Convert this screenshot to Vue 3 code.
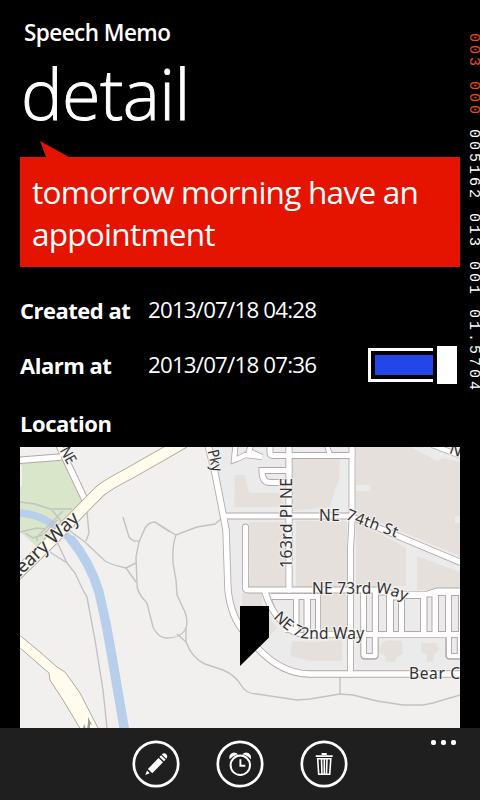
<script setup>
import { ref } from 'vue'

const memo = ref('tomorrow morning have an appointment')
const created = '2013/07/18 04:28'
const alarm = '2013/07/18 07:36'
const alarmOn = ref(true)

const trails = [
  'M20,502L35,504L50,509H72', 'M37,541V537L63,511', 'M52,510L60,520L70,531L85,542L105,561Q112,565 126,568L136,563',
  'M20,532L37,528L45,529', 'M25,533L33,538L43,535L57,520', 'M87,512L88,523L89,533L86,541',
  'M57,542L67,563L75,573L83,590L87,597L95,640L103,690L107,728', 'M50,552L67,563',
  'M123,517L129,537Q133,542 139,541', 'M170,532Q159,525 155,522Q149,522 145,528L139,542L136,557L137,583Q136,592 147,603L153,627Q158,638 167,638Q180,638 185,630',
  'M126,568L136,582', 'M155,522L176,535L197,527L215,524L221,519', 'M176,535Q172,545 173,563L176,580L177,595L185,612Q189,623 185,630',
  'M186,627V642', 'M177,634L186,642Q192,658 205,664L223,670Q235,675 241,685Q246,694 257,694L297,700L310,699L340,694L353,695L377,701L403,705H423L433,703L460,695', 'M340,676V694'
]
const roads = [
  ['M207,440L209,449L215,473L223,514L226,530L228,590Q231,618 246,634Q275,674 310,674H465', 5.6],
  ['M227,516H350L393,534L462,563', 5.2],
  ['M289,440V590', 5.4],
  ['M352,440V520L350.5,550V674', 5.2],
  ['M245.500,527V587Q245,590 248,590H383Q390,594 400,595H425L437,591H465', 5.2],
  ['M270,440V452Q270,455.500 273,455.500H352', 5.2],
  ['M289,470.500H262Q262,482.500 270,482.500H289', 5.2],
  ['M236,440L234,460Q240,458 245,455L262,457L249,451L253,440', 4.4],
  ['M265,592Q270,610 284,624Q292,634 307,634.500H465', 5.4],
  ['M325,440L330,455', 4]
]
const lotBoxes = [
  [366.5, 593, 5.8, 38.5], [378.5, 595, 8, 36.500], [393.5, 600, 5, 31.500], [404.5, 598.5, 16, 33],
  [427, 597, 5, 34.500], [438.5, 595.5, 7, 36], [451.5, 595.5, 7, 36],
  [299, 599.5, 5, 33], [310.5, 599.5, 5, 32]
]
</script>

<template>
  <main class="phone">
    <header class="head">
      <p class="app-name">Speech Memo</p>
      <h1 class="title">detail</h1>
    </header>

    <section class="content">
      <svg class="tail" viewBox="0 0 29 16"><path d="M0,0L29,16H6Z" /></svg>
      <div class="bubble">{{ memo }}</div>
      <div class="row created">
        <b>Created at</b><span>{{ created }}</span>
      </div>
      <div class="row alarm">
        <b>Alarm at</b><span>{{ alarm }}</span>
        <button class="toggle" :aria-pressed="alarmOn" @click="alarmOn = !alarmOn">
          <span class="track"><span class="fill"></span></span><span class="thumb"></span>
        </button>
      </div>
      <h2 class="loc">Location</h2>

      <svg class="map" viewBox="20 447 440 281">
        <rect x="20" y="447" width="440" height="281" fill="#f1f0ef" />
        <path fill="#ebebeb" d="M208,447L226,520L228,590L238,622Q270,674 310,674H460V447Z" />
        <g fill="#e6e0dd">
          <path d="M235,475H245L249,493H280L285,507L234,507Z" />
          <path d="M249,522H285V583H250Z" />
          <path d="M292,458H340L339,480L335,490L330,507L292,511Z" />
          <path d="M296,521H347V587H296Z" />
          <path d="M356,447H410L438,461L442,458L460,462V556L400,531L356,513Z" />
          <path d="M356,522L392,540L406,548V586H356Z" />
          <path d="M417,556L460,572V590H417Z" />
          <path d="M249,578H286V588H249Z" />
          <path d="M242,593H262V606H242Z" />
          <path d="M269,617L277,628L269,637Z" />
          <path d="M292,641L312,642L342,640V661H310L290,656Z" />
          <path d="M321,594H347V631H321Z" />
          <path d="M382,642L390,640L402,641L403,654L397,657L395,662H385L386,656L379,653Z" />
          <path d="M421,643H436L439,650L434,655L433,662H427V655L421,652Z" />
        </g>
        <g fill="#ebebeb">
          <path d="M356,485H370V491H356ZM455,516H460V523H455ZM406,556H417V590H406Z" />
        </g>
        <path d="M432,445L464,457" stroke="#b3a9a8" stroke-width="6" />
        <path d="M432,445L464,457" stroke="#fff" stroke-width="4.500" />
        <path fill="#d9e6c9" d="M20,463L64,459L84,498L37,547L20,532V486H22V465H20Z" />
        <path class="river" d="M16,513Q45,512 73,542L80,551" stroke-width="7.500" />
        <path class="river" d="M70,538Q90,562 99,592Q107,625 112,657L124.500,730" stroke-width="9.500" />
        <path v-for="t in trails" :key="t" :d="t" class="trail" />

        <path class="yellow" d="M14,633L20,635.500L40,652L57,667L65,672L80,693L99,730H81L63,700L50,680L49,673L20,648L14,642Z" />
        <path d="M88,717L92,725L90,724V729H87L88,723ZM84,724L86,729H83Z" fill="#999" />
        <g fill="none">
          <path d="M16,460.500L61,457M58,443L85,500" stroke="#b3a8a6" stroke-width="7.500" />
          <path d="M16,460.500L61,457M58,443L85,500" stroke="#fff" stroke-width="5.500" />
          <path d="M14,577L53,539L87,504L100,491Q107,485 130,473L165,453L184,442" stroke="#b3a89c" stroke-width="12.500" />
          <path d="M14,577L53,539L87,504L100,491Q107,485 130,473L165,453L184,442" stroke="#fffcee" stroke-width="10.700" />
          <path v-for="r in roads" :key="'c' + r[0]" :d="r[0]" stroke="#b3a9a8" :stroke-width="r[1] + 1.7" stroke-linecap="round" />
          <path d="M361,592V655Q361,659 365,659H374Q378,659 378,655V636H446V655Q446,659 450,659H462V592" stroke="#b3a9a8" stroke-width="1.500" />
          <path d="M271,594H320V632H285" stroke="#b3a9a8" stroke-width="1.500" />
        </g>
        <path fill="#fff" d="M361,592H462V658H450Q447,658 447,655V636H377.500V655Q377.500,658 374,658H365Q361.500,658 361.500,655Z" />
        <path fill="#fff" d="M271,594H320V632H285Z" />
        <path v-for="r in roads" :key="'w' + r[0]" :d="r[0]" fill="none" stroke="#fff" :stroke-width="r[1]" stroke-linecap="round" />
        <g class="lot">
          <rect v-for="b in lotBoxes" :key="b[0]" :x="b[0]" :y="b[1]" :width="b[2]" :height="b[3]" />
          <rect x="366.500" y="637.500" width="5.800" height="16" />
          <rect x="451.500" y="637.500" width="5.800" height="16" />
          <path d="M271.500,599.500H293.500V627Q278,619 271.500,599.500Z" />
        </g>

        <defs>
          <path id="p74" d="M319,520.500H349L397,538" />
          <path id="p73" d="M312,593.500H374Q386,592 407,601.500" />
          <path id="p72" d="M273,617.500Q286,632 299,637Q302,638.500 308,638.500H366" />
        </defs>
        <g class="label">
          <text><textPath href="#p74" textLength="80">NE 74th St</textPath></text>
          <text><textPath href="#p73" textLength="95">NE 73rd Way</textPath></text>
          <text><textPath href="#p72" textLength="98">NE 72nd Way</textPath></text>
          <text x="409" y="678.500" textLength="51">Bear C</text>
          <text transform="translate(291.700 568) rotate(-90)" textLength="90">163rd Pl NE</text>
          <text transform="translate(207.500 451) rotate(77)" textLength="22" lengthAdjust="spacingAndGlyphs">Pky</text>
          <text transform="translate(59.500 450.500) rotate(61)" textLength="17" lengthAdjust="spacingAndGlyphs">NE</text>
          <text transform="translate(448.500 453) rotate(20)">N.</text>
          <text class="big" transform="translate(15.500 581) rotate(-43.500)" textLength="89" lengthAdjust="spacingAndGlyphs">Leary Way</text>
        </g>
        <path d="M240,606H269V637.500L240,666Z" />
      </svg>
    </section>

    <footer class="bar">
      <svg class="icon" viewBox="0 0 48 48">
        <circle cx="24" cy="24" r="22.200" />
        <g class="solid">
          <path d="M13.300,35L15,30.500L17.800,33.200ZM15.900,29L26.500,18L31,22.300L20.300,33.200ZM27.500,17L29,15.300L33.600,19.600L32,21.300ZM29.800,14.500Q32,12.300 34.300,14.300Q36.300,16.600 34.300,18.800Z" />
        </g>
      </svg>
      <svg class="icon" viewBox="0 0 48 48">
        <circle cx="24" cy="24" r="22.200" />
        <circle cx="24.300" cy="25.300" r="9.700" class="thin" />
        <path class="hands" d="M24.400,19.300V25.800H29.300" />
        <path class="solid" d="M13.500,19.200Q12.500,15 16,13Q19.500,11.500 22,14.200Q16.500,15.500 13.500,19.200ZM34.800,19.200Q35.800,15 32.300,13Q28.800,11.500 26.300,14.200Q32,15.500 34.800,19.200Z" />
      </svg>
      <svg class="icon" viewBox="0 0 48 48">
        <circle cx="24" cy="24" r="22.200" />
        <path class="solid" d="M15.700,15.200H32.700V17.100H15.700ZM21.600,13.100H26.800V15H21.600Z" />
        <path class="can" d="M17.700,18.800H30.800L29.700,34.300H18.700ZM21.500,19L22,34M24.300,19V34M27,19L26.500,34" />
      </svg>
      <span class="more"><i></i><i></i><i></i></span>
    </footer>

    <aside class="counters"><span class="hot">003 000 </span>005162 013 001 01.5704</aside>
  </main>
</template>

<style>
body { margin: 0; background: #000; }
</style>

<style scoped>
.phone {
  position: relative; width: 480px; height: 800px; overflow: hidden;
  display: flex; flex-direction: column; background: #000; color: #fff;
  font-family: "Open Sans", "Noto Sans", sans-serif;
}
.head { height: 141px; padding-left: 24px; box-sizing: border-box; }
.app-name { margin: 0; padding-top: 18px; font-size: 22.500px; line-height: 30px; font-weight: 600; letter-spacing: -0.55px; }
.title {
  margin: 0 0 0 -3px; font-size: 70px; line-height: 90px; font-weight: 300; letter-spacing: -0.6px;
  -webkit-text-stroke: 0.9px #fff;
}
.content { padding: 0 20px; flex: 1; display: flex; flex-direction: column; }
.tail { display: block; width: 29px; height: 16px; margin-left: 20px; fill: #e51400; }
.bubble {
  height: 110px; box-sizing: border-box; padding: 14px 12px 0; background: #e51400;
  font-size: 31.500px; line-height: 42px; letter-spacing: -0.73px;
}
.row { display: flex; align-items: center; font-size: 22.300px; line-height: 30px; height: 38px; letter-spacing: -0.8px; }
.row b { width: 128px; font-size: 22px; font-weight: 700; letter-spacing: -0.5px; white-space: nowrap; }
.created { margin-top: 24px; }
.alarm { margin-top: 17px; }
.toggle { display: flex; align-items: center; gap: 4px; margin: 0 3px 0 auto; padding: 0; border: 0; background: none; }
.track { width: 65px; height: 34px; box-sizing: border-box; border: 3px solid #fff; border-right: 0; padding: 4px 0 4px 4px; }
.fill { display: block; height: 20px; background: #2346e8; }
.thumb { width: 20px; height: 38px; background: #fff; }
.loc { margin: 24px 0 0; height: 39px; line-height: 30px; font-size: 22px; font-weight: 700; letter-spacing: -0.45px; }
.map { display: block; width: 440px; height: 281px; }
.river { fill: none; stroke: #b8cfec; }
.trail { fill: none; stroke: #c2c2c2; stroke-width: 1.4; }
.yellow { fill: #fffcee; stroke: #b3a89c; }
.lot { fill: #ebebeb; stroke: #b3a9a8; }
.label {
  font-family: "Noto Sans", sans-serif; font-size: 15.500px; fill: #333;
  stroke: #f5f3f2; stroke-width: 2.5px; stroke-opacity: .75; stroke-linejoin: round; paint-order: stroke;
}
.big { font-size: 18.500px; }
.bar { height: 72px; background: #1f1f1f; display: flex; justify-content: center; align-items: center; gap: 36px; position: relative; }
.icon { width: 48px; height: 48px; fill: none; stroke: #fff; stroke-width: 2.700; }
.solid { fill: #fff; stroke: none; }
.thin { stroke-width: 2; }
.hands { stroke-width: 1.900; }
.can { stroke-width: 1.600; }
.more { position: absolute; right: 24px; top: 12px; display: flex; gap: 5px; }
.more i { width: 5px; height: 5px; border-radius: 2px; background: #fff; }
.counters {
  position: absolute; left: 466px; top: 33px; writing-mode: vertical-rl; white-space: pre;
  font-family: "Liberation Mono", monospace; font-size: 15px; line-height: 14px; letter-spacing: 3px;
}
.hot { color: #f2480c; }
</style>
